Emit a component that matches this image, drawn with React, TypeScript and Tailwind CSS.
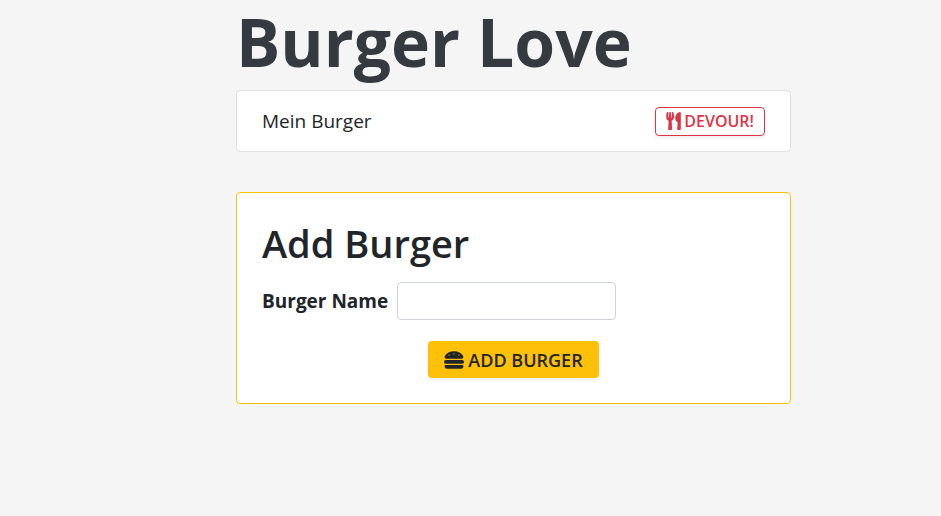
import { FaHamburger, FaUtensils } from "react-icons/fa";

export default function App() {
  return (
    <main className="min-h-screen bg-[#f5f5f5] pr-[150px] pl-[236px] font-['Open_Sans','Noto_Sans',sans-serif] text-[#212529]">
      <h1 className="pb-2 text-[66px] leading-[82px] font-bold text-[#343a40]">Burger Love</h1>
      <ul>
        <li className="flex min-h-[62px] items-center justify-between rounded border border-[#dfdfdf] bg-white px-[25px]">
          <span className="text-[19px] leading-7">Mein Burger</span>
          <button
            type="button"
            className="flex h-[29px] items-center gap-[3px] rounded border border-[#dc3545] px-2.5 text-base leading-7 font-semibold text-[#dc3545] shadow-[0_2px_4px_rgba(0,0,0,0.075)]"
          >
            <FaUtensils aria-hidden="true" className="h-[18px] w-[15px]" />
            DEVOUR!
          </button>
        </li>
      </ul>
      <section className="mt-10 rounded border border-[#ffc107] bg-white p-[25px]">
        <h2 className="text-[38px] leading-[50px] font-semibold">Add Burger</h2>
        <form className="mt-3.5">
          <div className="flex items-center gap-[9px]">
            <label htmlFor="burger-name" className="text-[19px] font-bold">
              Burger Name
            </label>
            <input
              id="burger-name"
              type="text"
              className="h-[38px] w-[219px] rounded border border-[#ced4da] bg-white px-3"
            />
          </div>
          <div className="mt-[21px] flex justify-center">
            <button
              type="submit"
              className="flex h-[37px] items-center gap-1 rounded bg-[#ffc107] px-4 text-lg font-semibold shadow-[0_2px_4px_rgba(0,0,0,0.075)]"
            >
              <FaHamburger aria-hidden="true" className="size-5" />
              ADD BURGER
            </button>
          </div>
        </form>
      </section>
    </main>
  );
}
